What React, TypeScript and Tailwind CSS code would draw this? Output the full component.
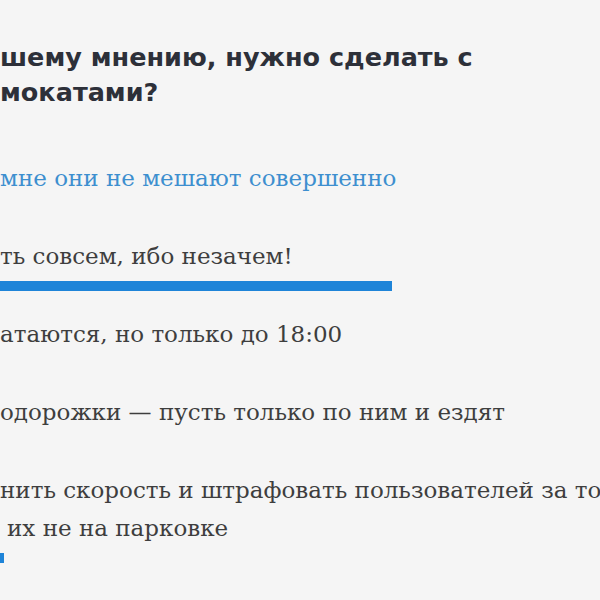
const options = [
  { lines: ["мне они не мешают совершенно"], percent: 0, active: true },
  { lines: ["ть совсем, ибо незачем!"], percent: 392 },
  { lines: ["атаются, но только до 18:00"], percent: 0 },
  { lines: ["одорожки — пусть только по ним и ездят"], percent: 0 },
  { lines: ["нить скорость и штрафовать пользователей за то", "т их не на парковке"], percent: 4 },
];

function PollOption({ lines, percent, active }: { lines: string[]; percent: number; active?: boolean }) {
  return (
    <div className="mb-6">
      {lines.map((line, i) => (
        <div
          key={line}
          className={`whitespace-nowrap text-[23px] leading-[38px] ${i > 0 ? "-ml-[13px]" : ""} ${
            active ? "text-[#3d8fcf]" : "text-[#3e3e3e]"
          }`}
        >
          {line}
        </div>
      ))}
      <div className="mt-1.5 h-2.5">
        <div className="h-full bg-[#1e84d8]" style={{ width: percent }} />
      </div>
    </div>
  );
}

export default function App() {
  return (
    <div className="h-[600px] w-[600px] overflow-hidden bg-[#f5f5f5]">
      <div className="pt-10">
        <h2 className="whitespace-nowrap font-['DejaVu_Sans','Liberation_Sans',sans-serif] text-[25.5px] font-bold leading-[35px] text-[#2d3039]">
          <div>шему мнению, нужно сделать с</div>
          <div>мокатами?</div>
        </h2>
        <div className="mt-[49px] font-['DejaVu_Serif','Liberation_Serif',serif]">
          {options.map((o) => (
            <PollOption key={o.lines[0]} {...o} />
          ))}
        </div>
      </div>
    </div>
  );
}
